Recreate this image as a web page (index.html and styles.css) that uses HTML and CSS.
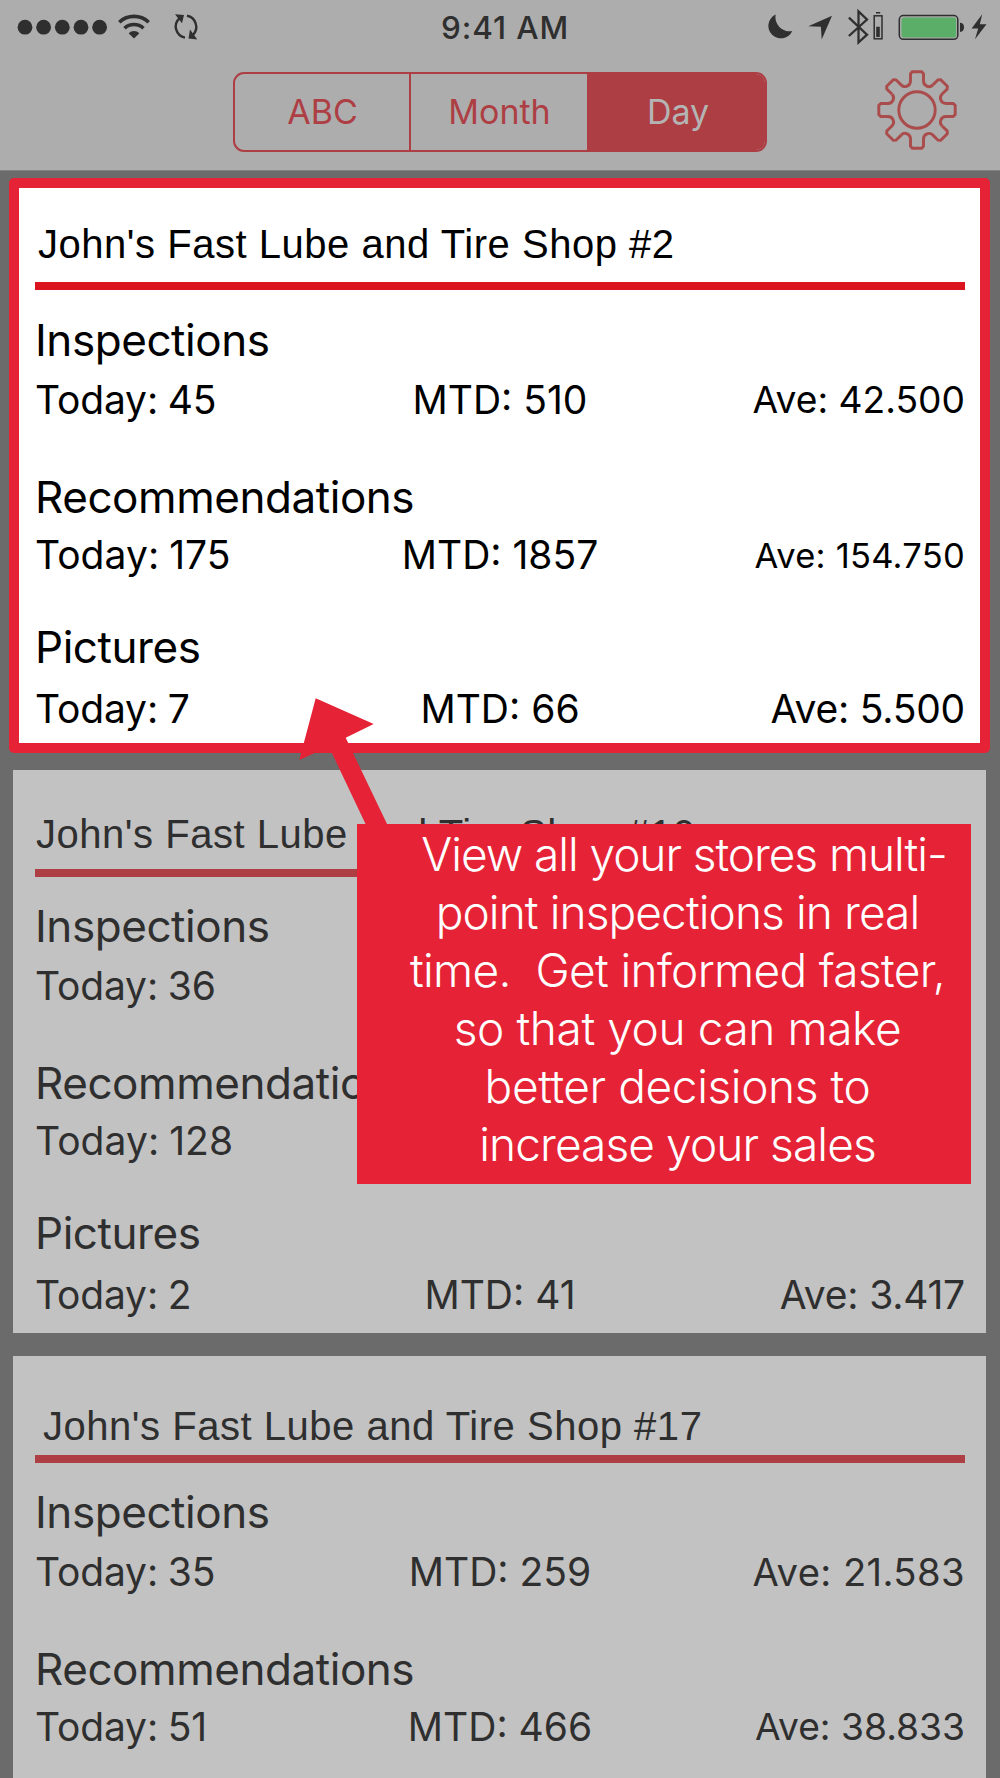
FILE: index.html
```
<!DOCTYPE html>
<html lang="en">
<head>
    <meta charset="UTF-8">
    <meta name="viewport" content="width=device-width, initial-scale=1.0">
    <title>Store Inspections</title>
    <link rel="stylesheet" href="styles.css">
</head>
<body>
    <div class="screen">
        <header class="header">
            <div class="status-bar">
                <div class="status-left">
                    <svg width="90" height="54" viewBox="17 0 90 54">
                        <circle cx="25" cy="27.2" r="7.4"/>
                        <circle cx="43.6" cy="27.2" r="7.4"/>
                        <circle cx="62.3" cy="27.2" r="7.4"/>
                        <circle cx="81" cy="27.2" r="7.4"/>
                        <circle cx="99.6" cy="27.2" r="7.4"/>
                    </svg>
                    <!-- wifi -->
                    <svg class="wifi" width="34" height="54" viewBox="117 0 34 54">
                        <path class="line" d="M119.3 22.2A21.5 21.5 0 0 1 148.7 22.2M124.5 28.2A14 14 0 0 1 143.5 28.2"/>
                        <path d="M128.6 33.2A8 8 0 0 1 139.4 33.2L134 38.6Z"/>
                    </svg>
                    <!-- sync -->
                    <svg class="sync" width="30" height="54" viewBox="172 0 30 54">
                        <path class="line" d="M185 37.6A11.3 11.3 0 0 1 179.3 18.3M187 15.8A11.3 11.3 0 0 1 193 34.8"/>
                        <path d="M175 14.3L184 15L182 23.3L179.8 20.5ZM197.3 39.4L188.5 38.6L190 29.6L192.6 33Z"/>
                    </svg>
                </div>
                <div class="clock">9:41 AM</div>
                <div class="status-right">
                    <!-- do not disturb -->
                    <svg width="30" height="54" viewBox="765 0 30 54">
                        <path d="M775.7 14.5A12.5 12.5 0 1 0 792.3 31A14 14 0 0 1 775.7 14.5Z"/>
                    </svg>
                    <!-- location -->
                    <svg width="40" height="54" viewBox="795 0 40 54">
                        <path d="M832 15.8L808.3 26.2L820.9 26.8L821.7 39.6Z"/>
                    </svg>
                    <!-- bluetooth + accessory battery -->
                    <svg width="53" height="54" viewBox="835 0 53 54">
                        <path class="line bt" d="M848.9 17.7L867 34.7L858.5 42.5V11.5L867 19.5L848.9 36"/>
                        <rect class="line thin" x="874.2" y="15.8" width="7.8" height="23"/>
                        <path d="M876 12h4.2v1.6h-4.2zM876.2 26.7h3.6v10.4h-3.6z"/>
                    </svg>
                    <!-- battery -->
                    <svg width="80" height="54" viewBox="888 0 80 54">
                        <rect class="line thin" x="899.3" y="15.5" width="58.5" height="23.8" rx="4"/>
                        <rect class="charge" x="901.5" y="17.6" width="54.6" height="19.8" rx="2.5"/>
                        <path d="M960 22.7Q964 22.7 964 27.3T960 32Z"/>
                    </svg>
                    <svg width="32" height="54" viewBox="968 0 32 54">
                        <path d="M982.2 14.3L971.6 28.4H978.2L975 39.2L986.5 24.2H979.8Z"/>
                    </svg>
                </div>
            </div>
            <nav class="nav">
                <div class="segmented">
                    <span class="segment">ABC</span>
                    <span class="segment">Month</span>
                    <span class="segment active">Day</span>
                </div>
                <svg class="gear" width="80" height="80" viewBox="-40 -40 80 80">
                    <defs>
                        <path id="tooth" d="M-6.5 -29V-36.2L-4.7 -38.2H4.7L6.5 -36.2V-29C6.5 -24.2 12.2 -21.4 15.9 -25.1"/>
                    </defs>
                    <circle r="18.2"/>
                    <use href="#tooth"/>
                    <use href="#tooth" transform="rotate(45)"/>
                    <use href="#tooth" transform="rotate(90)"/>
                    <use href="#tooth" transform="rotate(135)"/>
                    <use href="#tooth" transform="rotate(180)"/>
                    <use href="#tooth" transform="rotate(225)"/>
                    <use href="#tooth" transform="rotate(270)"/>
                    <use href="#tooth" transform="rotate(315)"/>
                </svg>
            </nav>
        </header>

        <main class="stores">
            <section class="card featured">
                <h2 class="store-name">John's Fast Lube and Tire Shop #2</h2>
                <h3 class="inspections">Inspections</h3>
                <div class="stats"><span>Today: 45</span><span>MTD: 510</span><span class="fit">Ave: 42.500</span></div>
                <h3 class="recommendations">Recommendations</h3>
                <div class="stats"><span class="wide">Today: 175</span><span>MTD: 1857</span><span class="fit-long">Ave: 154.750</span></div>
                <h3 class="pictures">Pictures</h3>
                <div class="stats"><span>Today: 7</span><span>MTD: 66</span><span>Ave: 5.500</span></div>
            </section>

            <section class="card second">
                <h2 class="store-name">John's Fast Lube and Tire Shop #10</h2>
                <h3 class="inspections">Inspections</h3>
                <div class="stats"><span>Today: 36</span></div>
                <h3 class="recommendations">Recommendations</h3>
                <div class="stats"><span class="wide">Today: 128</span></div>
                <h3 class="pictures">Pictures</h3>
                <div class="stats"><span>Today: 2</span><span>MTD: 41</span><span>Ave: 3.417</span></div>
            </section>

            <section class="card third">
                <h2 class="store-name">John's Fast Lube and Tire Shop #17</h2>
                <h3 class="inspections">Inspections</h3>
                <div class="stats"><span>Today: 35</span><span>MTD: 259</span><span class="fit-narrow">Ave: 21.583</span></div>
                <h3 class="recommendations">Recommendations</h3>
                <div class="stats"><span>Today: 51</span><span>MTD: 466</span><span class="fit">Ave: 38.833</span></div>
            </section>
        </main>

        <!-- tip shown over the store list -->
        <svg class="arrow" width="90" height="130" viewBox="299 697 90 130">
            <path d="M315.7 698.3L373.7 724L345.7 737.8L388 826H366.5L328.8 746.5L299.3 760Z"/>
        </svg>
        <div class="callout">
            <p class="first-line">View all your stores multi-</p>
            <p class="tight">point inspections in real</p>
            <p>time.&nbsp; Get informed faster,</p>
            <p class="loose">so that you can make</p>
            <p class="loose">better decisions to</p>
            <p class="tight">increase your sales</p>
        </div>
    </div>
</body>
</html>
```
FILE: styles.css
```
:root {
    --page-bg: #6b6b6b;
    --header-bg: #adadad;
    --card-bg: #c2c2c2;
    --ink: #2f2f2f;
    --dim-red: #ad3f44;
    --bright-red: #e62236;
}

* {
    box-sizing: border-box;
    margin: 0;
    padding: 0;
}

body {
    font-family: Inter, "Liberation Sans", sans-serif;
    font-weight: 400;
    color: var(--ink);
    background: var(--page-bg);
}

.screen {
    position: relative;
    width: 1000px;
    height: 1778px;
    overflow: hidden;
    background: var(--page-bg);
}

/* Header */
.header {
    height: 171px;
    background: var(--header-bg);
    border-bottom: 1px solid #828282;
}

.status-bar {
    display: grid;
    grid-template-columns: 424px auto 1fr;
    height: 54px;
    margin-left: 17px;
    fill: var(--ink);
}

.status-left,
.status-right {
    display: flex;
}

.status-right {
    justify-content: flex-end;
}

.wifi {
    margin-left: 10px;
}

.sync {
    margin-left: 21px;
}

.line {
    fill: none;
    stroke: var(--ink);
    stroke-width: 3.6;
}

.sync .line {
    stroke-width: 2.4;
}

.line.bt {
    stroke-width: 2.3;
}

.line.thin {
    stroke-width: 1.5;
}

.charge {
    fill: #5bae68;
}

.clock {
    font-size: 31.5px;
    font-weight: 500;
    line-height: 56px;
    letter-spacing: 0.9px;
}

.nav {
    display: flex;
    align-items: flex-start;
    padding-left: 233px;
}

.segmented {
    display: grid;
    grid-template-columns: 176px 178px 1fr;
    width: 534px;
    height: 80px;
    margin-top: 18px;
    border: 2px solid var(--dim-red);
    border-radius: 11px;
    overflow: hidden;
}

.segment {
    padding-left: 1px;
    font-size: 34px;
    line-height: 76px;
    text-align: center;
    color: var(--dim-red);
    border-right: 2px solid var(--dim-red);
}

.segment.active {
    padding-left: 2px;
    color: #b4b4b4;
    background: var(--dim-red);
    border-right: none;
}

.gear {
    margin: 16px 0 0 110px;
    fill: none;
    stroke: #a94c4b;
    stroke-width: 2.9;
}

/* Store cards */
.stores {
    padding-top: 7px;
}

.card {
    width: 973px;
    height: 563px;
    margin: 0 0 23px 13px;
    padding: 0 21px 0 22px;
    background: var(--card-bg);
}

.card.featured {
    width: 981px;
    height: 575px;
    margin: 0 0 17px 9px;
    padding: 0 15px 0 16px;
    color: #000;
    background: #fff;
    border: 10px solid var(--bright-red);
    border-radius: 5px;
}

.store-name {
    height: 107px;
    padding: 41px 0 0 1px;
    font-family: "Liberation Sans", Arial, sans-serif;
    font-size: 40px;
    font-weight: 400;
    line-height: 46px;
    letter-spacing: 0.53px;
    border-bottom: 8px solid var(--dim-red);
}

.featured .store-name {
    height: 102px;
    padding: 33px 0 0 3px;
    border-color: #dc141e;
}

.third .store-name {
    padding: 47px 0 0 8px;
}

h3 {
    font-size: 44px;
    font-weight: 400;
    line-height: 52px;
    letter-spacing: -0.45px;
}

.inspections {
    margin: 23px 0 10px;
}

.featured .inspections {
    margin-top: 24px;
}

.recommendations {
    margin: 47px 0 8px;
}

.pictures {
    margin: 42px 0 12px;
}

.stats {
    display: grid;
    grid-template-columns: 1fr auto 1fr;
    height: 48px;
    font-size: 39px;
    line-height: 48px;
}

.stats span:nth-child(1) {
    letter-spacing: -0.15px;
    word-spacing: -1px;
}

.stats .wide:nth-child(1) {
    letter-spacing: 0.05px;
}

.stats span:nth-child(3) {
    text-align: right;
    letter-spacing: -0.2px;
}

.stats .fit:nth-child(3) {
    font-size: 37.2px;
    letter-spacing: 0;
}

.stats .fit-narrow:nth-child(3) {
    font-size: 38.2px;
    letter-spacing: 0.4px;
}

.stats .fit-long:nth-child(3) {
    font-size: 34.5px;
    line-height: 50px;
    letter-spacing: 0.25px;
}

/* Tip */
.arrow {
    position: absolute;
    left: 299px;
    top: 697px;
    fill: var(--bright-red);
}

.callout {
    position: absolute;
    left: 357px;
    top: 824px;
    width: 614px;
    height: 360px;
    padding: 1px 0 0 27px;
    font-size: 46px;
    font-weight: 300;
    line-height: 58px;
    letter-spacing: -0.65px;
    text-align: center;
    color: #fff;
    background: var(--bright-red);
}

.first-line {
    padding-left: 13px;
    letter-spacing: -1.05px;
}

.tight {
    letter-spacing: -0.9px;
}

.loose {
    letter-spacing: -0.4px;
}
```
